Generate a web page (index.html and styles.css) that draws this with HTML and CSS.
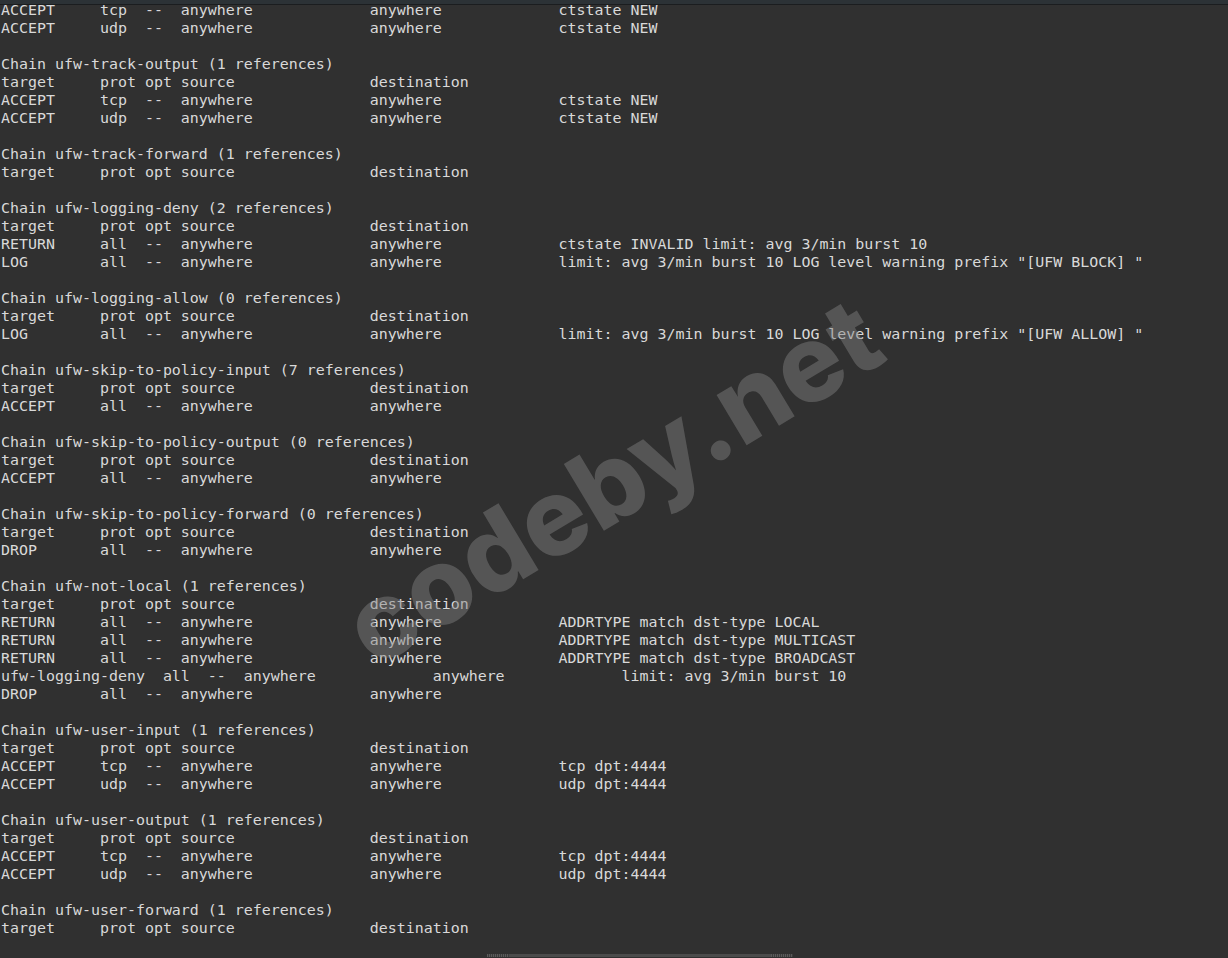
FILE: index.html
```html
<!DOCTYPE html>
<html>
<head>
<meta charset="utf-8">
<link rel="stylesheet" href="styles.css">
</head>
<body>
<div class="term">
<div class="topbar"></div>
<pre class="out">ACCEPT     tcp  --  anywhere             anywhere             ctstate NEW
ACCEPT     udp  --  anywhere             anywhere             ctstate NEW

Chain ufw-track-output (1 references)
target     prot opt source               destination
ACCEPT     tcp  --  anywhere             anywhere             ctstate NEW
ACCEPT     udp  --  anywhere             anywhere             ctstate NEW

Chain ufw-track-forward (1 references)
target     prot opt source               destination

Chain ufw-logging-deny (2 references)
target     prot opt source               destination
RETURN     all  --  anywhere             anywhere             ctstate INVALID limit: avg 3/min burst 10
LOG        all  --  anywhere             anywhere             limit: avg 3/min burst 10 LOG level warning prefix "[UFW BLOCK] "

Chain ufw-logging-allow (0 references)
target     prot opt source               destination
LOG        all  --  anywhere             anywhere             limit: avg 3/min burst 10 LOG level warning prefix "[UFW ALLOW] "

Chain ufw-skip-to-policy-input (7 references)
target     prot opt source               destination
ACCEPT     all  --  anywhere             anywhere

Chain ufw-skip-to-policy-output (0 references)
target     prot opt source               destination
ACCEPT     all  --  anywhere             anywhere

Chain ufw-skip-to-policy-forward (0 references)
target     prot opt source               destination
DROP       all  --  anywhere             anywhere

Chain ufw-not-local (1 references)
target     prot opt source               destination
RETURN     all  --  anywhere             anywhere             ADDRTYPE match dst-type LOCAL
RETURN     all  --  anywhere             anywhere             ADDRTYPE match dst-type MULTICAST
RETURN     all  --  anywhere             anywhere             ADDRTYPE match dst-type BROADCAST
ufw-logging-deny  all  --  anywhere             anywhere             limit: avg 3/min burst 10
DROP       all  --  anywhere             anywhere

Chain ufw-user-input (1 references)
target     prot opt source               destination
ACCEPT     tcp  --  anywhere             anywhere             tcp dpt:4444
ACCEPT     udp  --  anywhere             anywhere             udp dpt:4444

Chain ufw-user-output (1 references)
target     prot opt source               destination
ACCEPT     tcp  --  anywhere             anywhere             tcp dpt:4444
ACCEPT     udp  --  anywhere             anywhere             udp dpt:4444

Chain ufw-user-forward (1 references)
target     prot opt source               destination</pre>
<div class="watermark">codeby.net</div>
<div class="scrollbar"><span class="grip"></span><span class="track"></span><span class="grip"></span></div>
</div>
</body>
</html>
```
FILE: styles.css
```css
html, body {
  margin: 0;
  padding: 0;
  background: #303030;
  width: 1228px;
  height: 958px;
  overflow: hidden;
}
.term {
  position: relative;
  width: 1228px;
  height: 958px;
  background: #303030;
  overflow: hidden;
}
.topbar {
  position: absolute;
  left: 0;
  top: 0;
  width: 100%;
  height: 4px;
  background: #2c3236;
  border-bottom: 1px solid #1b1d1f;
  z-index: 3;
}
.out {
  margin: 0;
  padding: 1px 0 0 1px;
  font-family: "DejaVu Sans Mono", monospace;
  font-size: 14.95px;
  line-height: 18px;
  color: #d9d9d9;
  white-space: pre;
}
.watermark {
  position: absolute;
  left: 612px;
  top: 481px;
  transform: translate(-50%, -50%) rotate(-31deg);
  font-family: Inter, "Open Sans", sans-serif;
  font-weight: 800;
  font-size: 107px;
  letter-spacing: 0;
  line-height: 1;
  color: rgba(130, 130, 130, 0.45);
  white-space: nowrap;
  pointer-events: none;
  z-index: 2;
}
.scrollbar {
  position: absolute;
  left: 487px;
  bottom: 1px;
  width: 306px;
  height: 3px;
  display: flex;
}
.grip {
  width: 22px;
  background: repeating-linear-gradient(90deg, #5a5a5a 0 1px, #3c3c3c 1px 2px);
}
.track {
  flex: 1;
  background: #4b4b4b;
}
```
